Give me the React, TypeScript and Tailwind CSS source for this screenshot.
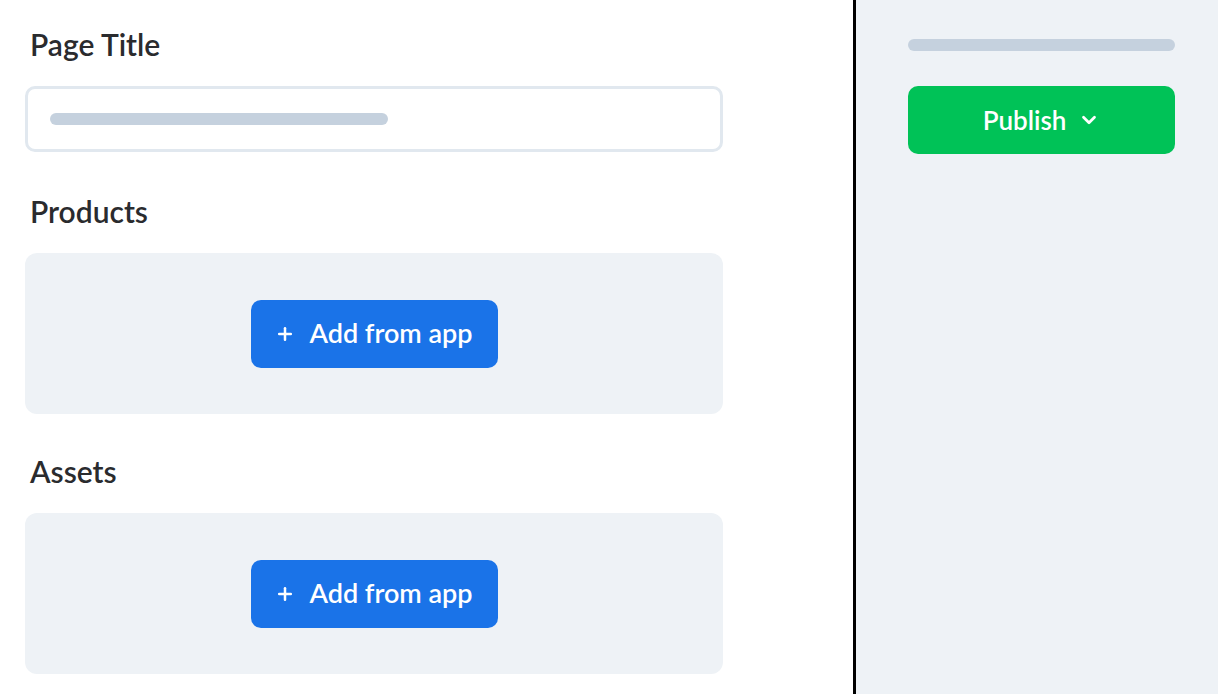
import { ChevronDown, Plus } from "lucide-react";

function Section({ title }: { title: string }) {
  return (
    <div>
      <h2 className="text-[30px] font-semibold text-[#2a2b2e] leading-none pl-[5px]">{title}</h2>
      <div className="mt-[27px] h-[161px] rounded-[12px] bg-[#eef2f6] flex items-center justify-center">
        <button className="h-[68px] w-[247px] rounded-[10px] bg-[#1a73e8] text-white text-[27px] font-semibold flex items-center justify-center gap-[14px]">
          <Plus size={20} strokeWidth={3} />
          <span>Add from app</span>
        </button>
      </div>
    </div>
  );
}

export default function App() {
  return (
    <div className="flex h-[694px] w-[1218px] overflow-hidden bg-white font-['Lato',sans-serif]">
      <main className="w-[853px] shrink-0 pl-[25px] pt-[29px]">
        <div className="w-[698px]">
          <h2 className="text-[30px] font-semibold text-[#2a2b2e] leading-none pl-[5px]">Page Title</h2>
          <div className="mt-[27px] h-[66px] rounded-[10px] border-[3px] border-[#e1e8ef] bg-white flex items-center pl-[22px]">
            <div className="h-[12px] w-[338px] rounded-full bg-[#c5d1de]" />
          </div>
          <div className="mt-[44px] flex flex-col gap-[42px]">
            <Section title="Products" />
            <Section title="Assets" />
          </div>
        </div>
      </main>
      <aside className="flex-1 border-l-[3px] border-black bg-[#eef2f6] pl-[52px] pr-[43px] pt-[39px]">
        <div className="h-[12px] rounded-full bg-[#c5d1de]" />
        <button className="mt-[35px] h-[68px] w-full rounded-[10px] bg-[#00c257] text-white text-[26px] font-semibold flex items-center justify-center gap-[12px]">
          <span>Publish</span>
          <ChevronDown size={22} strokeWidth={3} />
        </button>
      </aside>
    </div>
  );
}
